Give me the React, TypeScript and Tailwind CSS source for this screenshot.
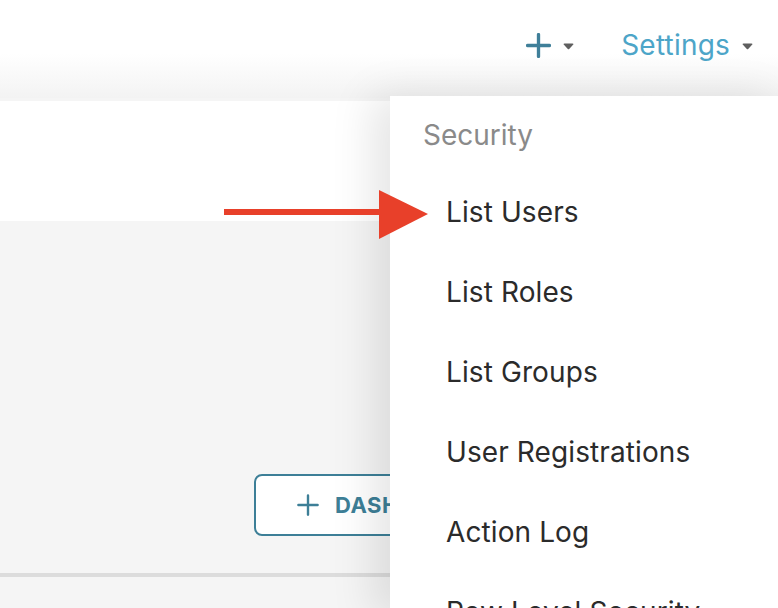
import React from 'react'

const Caret = () => (
  <svg width="11" height="7" viewBox="0 0 11 7" className="ml-[12px] mt-[2px] shrink-0">
    <path d="M0.5 1.2 Q0.5 0.5 1.5 0.5 L9.5 0.5 Q10.5 0.5 10.5 1.2 L6.2 6 Q5.5 6.7 4.8 6 Z" fill="#5f5f5f" />
  </svg>
)

const PlusIcon = ({ size = 24, stroke = 3 }: { size?: number; stroke?: number }) => (
  <svg width={size} height={size} viewBox="0 0 24 24" className="shrink-0">
    <path d="M12 1.5V22.5M1.5 12H22.5" stroke="currentColor" strokeWidth={stroke} strokeLinecap="round" />
  </svg>
)

const items = ['List Users', 'List Roles', 'List Groups', 'User Registrations', 'Action Log', 'Row Level Security']

export default function App() {
  return (
    <div
      className="relative w-[778px] h-[608px] overflow-hidden bg-[#f5f5f5]"
      style={{ fontFamily: 'Inter, "Noto Sans", sans-serif' }}
    >
      {/* Top navbar */}
      <header className="h-[98px] bg-gradient-to-b from-white from-55% to-[#f3f3f3] flex items-start justify-end pt-[28px] pr-[25px]">
        <div className="flex items-center h-[34px] text-[#3f7f99]">
          <PlusIcon size={25} stroke={3.2} />
          <Caret />
        </div>
        <div className="flex items-center h-[34px] ml-[47px]">
          <span className="text-[28px] leading-none text-[#4da5c8] tracking-[0.2px]">Settings</span>
          <Caret />
        </div>
      </header>

      {/* Page body */}
      <div className="mt-[3px] h-[120px] bg-white" />

      <div className="absolute left-[254px] top-[474px]">
        <button className="h-[62px] w-[260px] border-2 border-[#3d7f97] rounded-[8px] bg-white flex items-center pl-[41px] gap-[16px] text-[#3d7f97]">
          <PlusIcon size={22} stroke={2.6} />
          <span className="text-[22px] font-bold tracking-[0.5px] whitespace-nowrap">DASHBOARD</span>
        </button>
      </div>

      <div className="absolute left-0 top-[573px] w-[400px] h-[4px] bg-[#dcdcdc]" />

      {/* Dropdown menu */}
      <div className="absolute left-[390px] top-[96px] w-[400px] h-[520px] bg-white shadow-[-18px_0_40px_rgba(0,0,0,0.10)]">
        <div className="pl-[33px] pt-[20px] text-[28px] text-[#8a8a8a] leading-[38px]">Security</div>
        <ul className="mt-[39px]">
          {items.map((it) => (
            <li key={it} className="pl-[56px] h-[80px] text-[28px] text-[#2b2b2b] leading-[38px] tracking-[0.1px] whitespace-nowrap">
              {it}
            </li>
          ))}
        </ul>
      </div>

      {/* Annotation arrow */}
      <svg className="absolute left-[224px] top-[189px]" width="206" height="52" viewBox="0 0 206 52">
        <rect x="0" y="20" width="160" height="6" fill="#e8402a" />
        <path d="M155 1 L204 25 L155 50 Z" fill="#e8402a" />
      </svg>
    </div>
  )
}
